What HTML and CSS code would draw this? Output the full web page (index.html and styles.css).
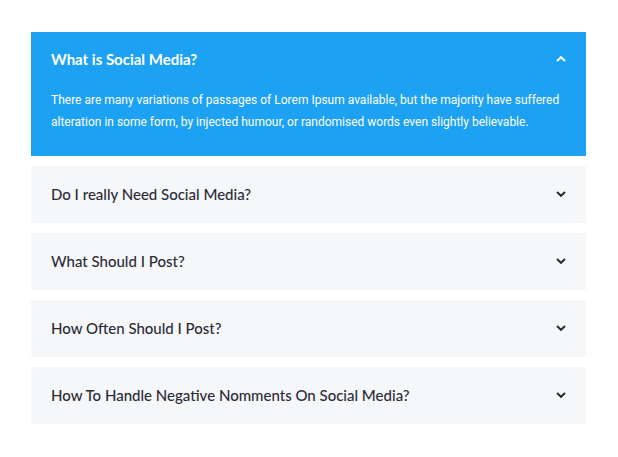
FILE: index.html
```html
<!DOCTYPE html>
<html>
<head>
<meta charset="utf-8">
<link rel="stylesheet" href="styles.css">
</head>
<body>
<div class="faq">
  <div class="item active">
    <div class="head">
      <span class="title">What is Social Media?</span>
      <svg class="chev" width="12" height="8" viewBox="0 0 12 8"><path d="M2 6 L6 2.2 L10 6" fill="none" stroke="currentColor" stroke-width="2"/></svg>
    </div>
    <div class="body">There are many variations of passages of Lorem Ipsum available, but the majority have suffered alteration in some form, by injected humour, or randomised words even slightly believable.</div>
  </div>
  <div class="item">
    <div class="head">
      <span class="title">Do I really Need Social Media?</span>
      <svg class="chev" width="12" height="8" viewBox="0 0 12 8"><path d="M2 2 L6 5.8 L10 2" fill="none" stroke="currentColor" stroke-width="2"/></svg>
    </div>
  </div>
  <div class="item">
    <div class="head">
      <span class="title">What Should I Post?</span>
      <svg class="chev" width="12" height="8" viewBox="0 0 12 8"><path d="M2 2 L6 5.8 L10 2" fill="none" stroke="currentColor" stroke-width="2"/></svg>
    </div>
  </div>
  <div class="item">
    <div class="head">
      <span class="title">How Often Should I Post?</span>
      <svg class="chev" width="12" height="8" viewBox="0 0 12 8"><path d="M2 2 L6 5.8 L10 2" fill="none" stroke="currentColor" stroke-width="2"/></svg>
    </div>
  </div>
  <div class="item">
    <div class="head">
      <span class="title">How To Handle Negative Nomments On Social Media?</span>
      <svg class="chev" width="12" height="8" viewBox="0 0 12 8"><path d="M2 2 L6 5.8 L10 2" fill="none" stroke="currentColor" stroke-width="2"/></svg>
    </div>
  </div>
</div>
</body>
</html>
```
FILE: styles.css
```css
html, body {
  margin: 0;
  padding: 0;
  background: #ffffff;
}
body {
  font-family: "Lato", "Open Sans", sans-serif;
}
.faq {
  margin: 32px 0 0 31px;
  width: 555px;
  display: flex;
  flex-direction: column;
  gap: 10px;
}
.item {
  background: #f6f7f9;
  color: #2b2b38;
}
.head {
  box-sizing: border-box;
  height: 57px;
  padding: 0 19px 2px 20px;
  display: flex;
  align-items: center;
  justify-content: space-between;
}
.title {
  font-size: 15px;
  font-weight: 500;
}
.chev {
  display: block;
  color: #2b2b38;
}
.item.active {
  background: #1da1f2;
  color: #ffffff;
}
.item.active .head {
  height: 55px;
}
.item.active .title {
  font-weight: 700;
}
.item.active .chev {
  color: #ffffff;
}
.body {
  font-family: "Roboto", sans-serif;
  font-size: 12px;
  line-height: 22px;
  padding: 2px 20px 23px 20px;
}
```
